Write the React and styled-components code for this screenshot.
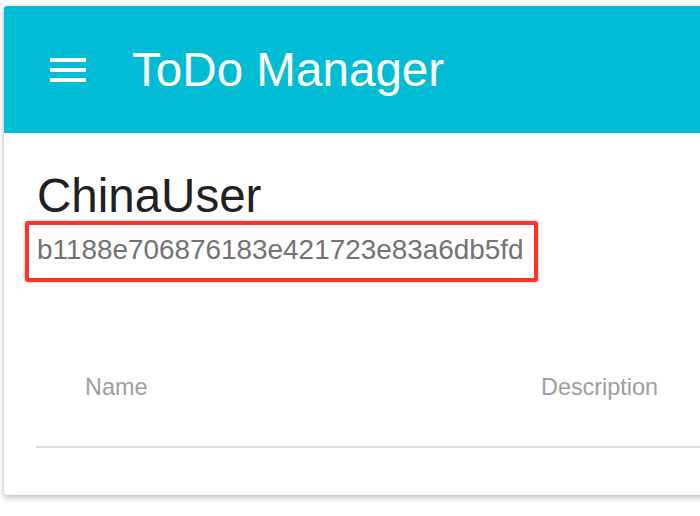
import styled, { createGlobalStyle } from 'styled-components'

const GlobalStyle = createGlobalStyle`
  body {
    margin: 0;
    background: #ffffff;
    overflow: hidden;
    font-family: "Liberation Sans", Arial, Helvetica, sans-serif;
  }
`;

const Page = styled.div`
  width: 700px;
  height: 516px;
  overflow: hidden;
  padding: 6px 0 0 4px;
  box-sizing: border-box;
`;

const Card = styled.section`
  width: 740px;
  background: #ffffff;
  border-radius: 3px;
  box-shadow: 0 3px 6px rgba(0, 0, 0, 0.22), 0 0 3px rgba(0, 0, 0, 0.14);
  overflow: hidden;
  padding-bottom: 47px;
`;

const AppBar = styled.header`
  height: 127px;
  background: #00bcd4;
  display: flex;
  align-items: center;
  padding-left: 46px;
  gap: 46px;
`;

const MenuButton = styled.div`
  width: 36px;
  display: flex;
  flex-direction: column;
  gap: 6px;

  span {
    display: block;
    height: 4px;
    background: #ffffff;
  }
`;

const Title = styled.h1`
  margin: 0;
  color: #ffffff;
  font-weight: 400;
  font-size: 47.6px;
  line-height: 56px;
`;

const Content = styled.div`
  padding: 36px 0 0 33px;
  display: flex;
  flex-direction: column;
  align-items: flex-start;
`;

const UserName = styled.h2`
  margin: 0;
  font-weight: 400;
  font-size: 47.5px;
  line-height: 54px;
  color: #212121;
`;

const Highlight = styled.div`
  margin: -2px 0 0 -12px;
  border: 4px solid #ff3529;
  border-radius: 3px;
  box-shadow: 0 0 2px rgba(255, 40, 30, 0.6);
  padding: 9px 10px 12px 8px;
`;

const UserId = styled.div`
  font-size: 27.9px;
  line-height: 32px;
  color: #737373;
  white-space: nowrap;
`;

const Table = styled.div`
  align-self: stretch;
  margin: 63px 0 0 -1px;
`;

const HeadRow = styled.div`
  display: grid;
  grid-template-columns: 456px 1fr;
  padding: 28px 0 45px 49px;
  border-bottom: 2px solid #e0e0e0;
`;

const HeadCell = styled.div`
  font-size: 23.4px;
  line-height: 28px;
  color: #9e9e9e;
`;

export default function App() {
  return (
    <>
      <GlobalStyle />
      <Page>
        <Card>
          <AppBar>
            <MenuButton>
              <span />
              <span />
              <span />
            </MenuButton>
            <Title>ToDo Manager</Title>
          </AppBar>
          <Content>
            <UserName>ChinaUser</UserName>
            <Highlight>
              <UserId>b1188e706876183e421723e83a6db5fd</UserId>
            </Highlight>
            <Table>
              <HeadRow>
                <HeadCell>Name</HeadCell>
                <HeadCell>Description</HeadCell>
              </HeadRow>
            </Table>
          </Content>
        </Card>
      </Page>
    </>
  )
}
